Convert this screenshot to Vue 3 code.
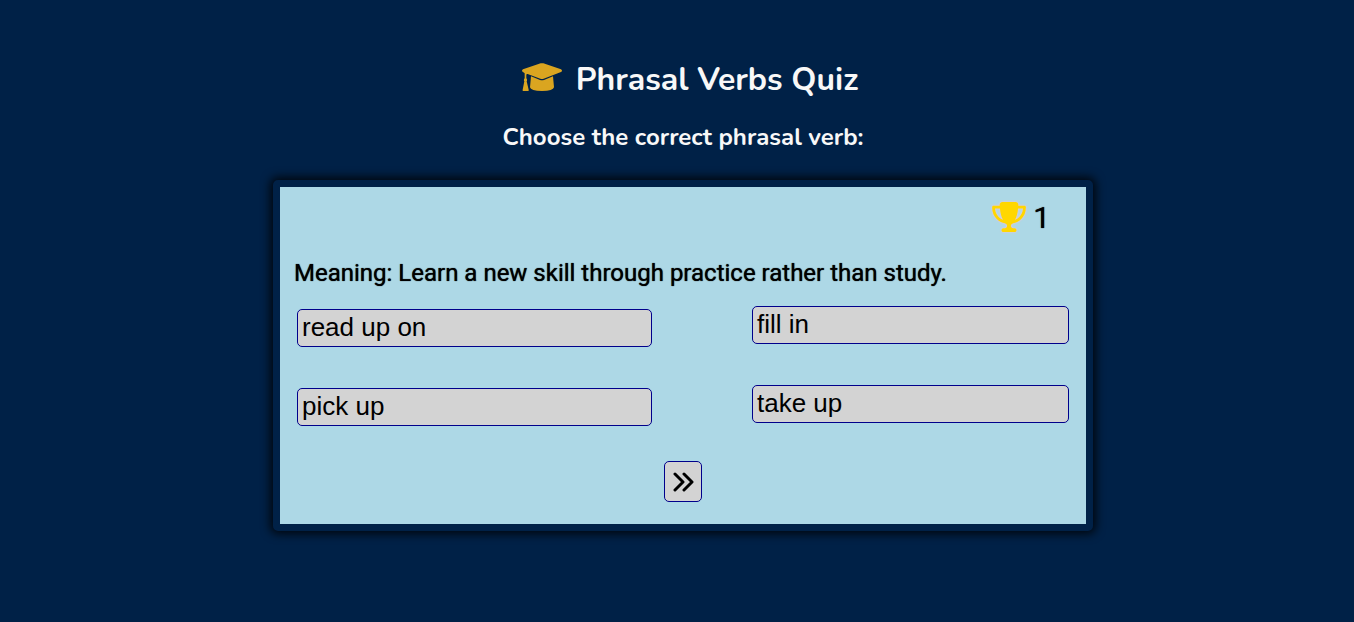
<script setup>
import { ref } from 'vue'

const score = ref(1)
const meaning = ref('Learn a new skill through practice rather than study.')
const columns = [
  ['read up on', 'pick up'],
  ['fill in', 'take up'],
]
const selected = ref('')
</script>

<template>
  <main class="page">
    <h1 class="title">
      <svg class="cap" viewBox="0 0 120 84" aria-hidden="true">
        <path d="M56 1Q60 0 64 1L117 19Q123 23 117 27L65 47Q60 49 55 47L17 33Q13 32 13 36V46Q17 50 14 55L20 80Q21 84 17 84H5Q1 84 2 80L7 55Q4 50 8 46V31L3 27Q-3 23 3 19Z" />
        <path d="M27 40L54 51Q60 53 66 51L93 40L96 73Q94 84 60 84Q26 84 24 73Z" />
      </svg>
      <span>Phrasal Verbs Quiz</span>
    </h1>
    <h2 class="subtitle">Choose the correct phrasal verb:</h2>

    <section class="card">
      <div class="score">
        <svg class="trophy" viewBox="0 0 576 512" role="img" aria-label="Score">
          <path d="M400 0H176c-26.500 0-48.100 21.800-47.100 48.200c.2 5.300 .4 10.600 .7 15.800H24C10.700 64 0 74.700 0 88c0 92.600 33.500 157 78.500 200.700c44.300 43.100 98.300 64.800 138.100 75.800c23.400 6.500 39.400 26 39.400 45.600c0 20.900-17 37.900-37.900 37.900H192c-17.700 0-32 14.300-32 32s14.300 32 32 32H384c17.700 0 32-14.300 32-32s-14.300-32-32-32H357.900C337 448 320 431 320 410.100c0-19.600 15.900-39.200 39.400-45.600c39.900-11 93.900-32.700 138.200-75.800C542.500 245 576 180.600 576 88c0-13.300-10.700-24-24-24H446.400c.3-5.200 .5-10.400 .7-15.800C448.100 21.800 426.500 0 400 0zM48.900 112h84.400c9.100 90.100 29.200 150.300 51.900 190.600c-24.900-11-50.800-26.500-73.200-48.300c-32-31.100-58-76-63-142.300zM464.100 254.300c-22.400 21.800-48.300 37.300-73.200 48.300c22.700-40.300 42.800-100.500 51.900-190.600h84.400c-5.100 66.300-31.100 111.200-63 142.300z" />
        </svg>
        <span>{{ score }}</span>
      </div>

      <p class="meaning">Meaning: {{ meaning }}</p>

      <div class="answers">
        <div v-for="(column, i) in columns" :key="i" class="column">
          <button
            v-for="answer in column"
            :key="answer"
            type="button"
            class="answer"
            @click="selected = answer"
          >{{ answer }}</button>
        </div>
      </div>

      <button type="button" class="next" aria-label="Next question">
        <svg viewBox="0 0 22 20" aria-hidden="true">
          <path d="M3 2l8 8-8 8M12 2l8 8-8 8" />
        </svg>
      </button>
    </section>
  </main>
</template>

<style>
body {
  background: #002147;
}
</style>

<style scoped>
.page {
  display: flex;
  flex-direction: column;
  align-items: center;
  padding: 57px 0 56px 12px;
  color: #f8f8f8;
  font-family: Nunito, Lato, "Open Sans", sans-serif;
}

.title {
  display: flex;
  align-items: center;
  gap: 14px;
  margin: 0;
  padding-left: 14px;
  font-size: 32px;
  line-height: 46px;
  font-weight: 700;
}

.cap {
  width: 40px;
  height: 28px;
  margin-bottom: 6px;
  fill: goldenrod;
}

.subtitle {
  margin: 18px 0 27px;
  font-size: 24px;
  line-height: 32px;
  font-weight: 700;
}

.card {
  box-sizing: border-box;
  width: 100%;
  max-width: 820px;
  padding: 12px 14px 22px;
  border: 7px solid #002147;
  border-radius: 5px;
  background: lightblue;
  box-shadow: 0 0 10px 3px rgba(0, 0, 0, 0.8);
  color: #000;
  font-family: Roboto, sans-serif;
}

.score {
  display: flex;
  align-items: center;
  justify-content: flex-end;
  gap: 7px;
  padding-right: 22px;
  font-size: 30px;
  line-height: 38px;
  font-weight: 400;
  text-shadow: 0 0 1px #000;
}

.trophy {
  width: 34px;
  height: 30px;
  margin-bottom: 2px;
  fill: gold;
  filter: drop-shadow(0 0 1px #ffc0cb);
}

.meaning {
  margin: 22px 0 19px;
  font-size: 24px;
  line-height: 28px;
  font-weight: 400;
  text-shadow: 0 0 1px #000;
}

.answers {
  display: grid;
  grid-template-columns: 355fr 317fr;
  column-gap: 100px;
  padding: 0 3px;
}

.column {
  display: flex;
  flex-direction: column;
  gap: 41px;
}

.column:first-child {
  padding-top: 3px;
}

.answer {
  padding: 2px 4px 4px;
  border: 1px solid darkblue;
  border-radius: 5px;
  background: lightgray;
  color: #000;
  font-family: "Liberation Sans", Arial, sans-serif;
  font-size: 26px;
  line-height: 30px;
  text-align: left;
  cursor: pointer;
}

.next {
  display: flex;
  align-items: center;
  justify-content: center;
  width: 38px;
  height: 41px;
  margin: 35px auto 0;
  padding: 0;
  border: 1px solid darkblue;
  border-radius: 5px;
  background: lightgray;
  cursor: pointer;
}

.next svg {
  width: 22px;
  height: 20px;
  fill: none;
  stroke: #000;
  stroke-width: 3;
  stroke-linecap: round;
  stroke-linejoin: round;
}
</style>
